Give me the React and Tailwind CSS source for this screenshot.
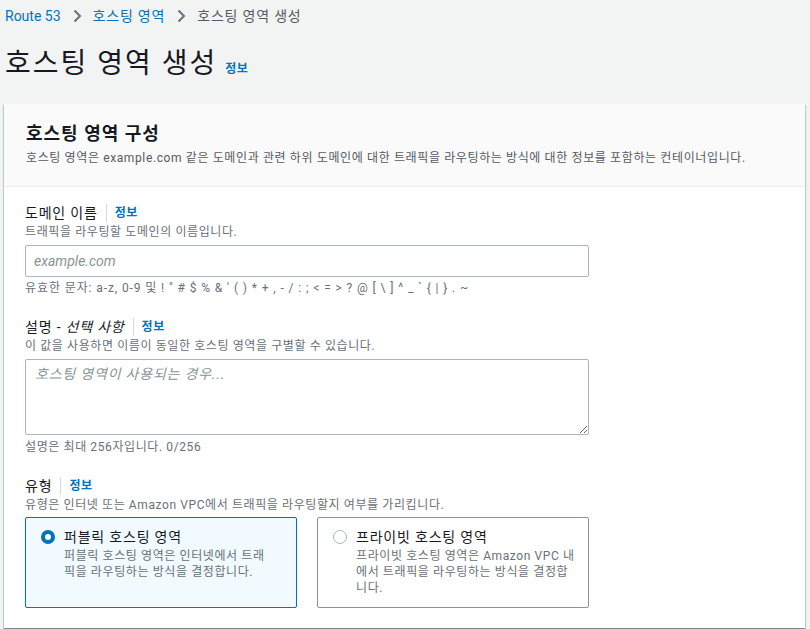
import { useState } from 'react'

const font = { fontFamily: 'Roboto, "Noto Sans CJK KR", sans-serif' }

function InfoLink() {
    return (
        <span className="flex items-center">
            <span className="mx-[8px] h-[18px] w-px bg-[#d5dbdb]"></span>
            <a href="#" className="text-[12px] font-bold leading-5 tracking-[0.6px] text-[#0073bb]">정보</a>
        </span>
    )
}

function FieldLabel({ children }) {
    return (
        <div className="flex items-center">
            <span className="text-[14px] leading-5 tracking-[0.8px] text-[#16191f]">{children}</span>
            <InfoLink />
        </div>
    )
}

function Chevron() {
    return (
        <svg width="16" height="16" viewBox="0 0 16 16" className="mx-[8px]">
            <path d="M5.5 2.5 11 8l-5.5 5.5" fill="none" stroke="#687078" strokeWidth="2" />
        </svg>
    )
}

function Tile({ selected, title, desc, onClick, wide }) {
    return (
        <div
            onClick={onClick}
            className={
                'flex h-[91px] cursor-pointer rounded-[2px] border pl-[15px] pt-[9px] ' +
                (wide ? 'pr-[10px] ' : 'pr-[24px] ') +
                (selected ? 'border-[#0073bb] bg-[#f1faff]' : 'border-[#879596] bg-white')
            }
        >
            <div className="mt-[3px] mr-[9px] flex-none">
                {selected ? (
                    <span className="block h-[14px] w-[14px] rounded-full border-[4px] border-[#0073bb] bg-white"></span>
                ) : (
                    <span className="block h-[14px] w-[14px] rounded-full border border-[#aab7b8] bg-white"></span>
                )}
            </div>
            <div>
                <div className="text-[14px] leading-5 tracking-[0.8px] text-[#16191f]">{title}</div>
                <div className="mt-px break-all text-[12px] leading-4 tracking-[0.6px] text-[#687078]">{desc}</div>
            </div>
        </div>
    )
}

export default function App() {
    const [domain, setDomain] = useState('')
    const [comment, setComment] = useState('')
    const [type, setType] = useState('public')

    return (
        <div className="min-h-screen bg-[#f2f3f3] pl-[4px] pr-[5px]" style={font}>
            <nav className="flex items-center pl-px pt-[6px] text-[14px] leading-5 tracking-[0.8px]">
                <a href="#" className="text-[#0073bb] tracking-normal">Route 53</a>
                <Chevron />
                <a href="#" className="text-[#0073bb]">호스팅 영역</a>
                <Chevron />
                <span className="text-[#545b64]">호스팅 영역 생성</span>
            </nav>

            <div className="mt-[20px] flex items-end pl-px">
                <h1 className="text-[28px] font-normal leading-9 tracking-[2px] text-[#16191f]">호스팅 영역 생성</h1>
                <a href="#" className="mb-[3px] ml-[8px] text-[12px] font-bold leading-5 tracking-[0.6px] text-[#0073bb]">정보</a>
            </div>

            <div className="mt-[22px] bg-white shadow-[0_1px_1px_0_rgba(0,28,36,0.3),1px_1px_1px_0_rgba(0,28,36,0.15),-1px_1px_1px_0_rgba(0,28,36,0.15)]">
                <div className="border-b border-[#eaeded] bg-[#fafafa] px-[22px] pb-[20px] pt-[19px]">
                    <h2 className="text-[18px] font-bold leading-[22px] tracking-[1px] text-[#16191f]">호스팅 영역 구성</h2>
                    <p className="mt-[5px] text-[12px] leading-4 tracking-[0.62px] text-[#545b64]">
                        호스팅 영역은 example.com 같은 도메인과 관련 하위 도메인에 대한 트래픽을 라우팅하는 방식에 대한 정보를 포함하는 컨테이너입니다.
                    </p>
                </div>

                <div className="px-[21px] pb-[20px] pt-[16px]">
                    <div className="w-[564px]">
                        <FieldLabel>도메인 이름</FieldLabel>
                        <p className="mt-px text-[12px] leading-4 tracking-[0.6px] text-[#687078]">트래픽을 라우팅할 도메인의 이름입니다.</p>
                        <input
                            type="text"
                            value={domain}
                            onChange={(e) => setDomain(e.target.value)}
                            placeholder="example.com"
                            className="mt-[5px] block h-[32px] w-full rounded-[2px] border border-[#aab7b8] bg-white px-[8px] text-[14px] text-[#16191f] outline-none placeholder:italic placeholder:text-[#879596]"
                        />
                        <p className="mt-[3px] text-[12px] leading-4 tracking-[0.9px] text-[#687078]">
                            유효한 문자: a-z, 0-9 및 ! " # $ % &amp; ' ( ) * + , - / : ; &lt; = &gt; ? @ [ \ ] ^ _ ` {'{'} | {'}'} . ~
                        </p>
                    </div>

                    <div className="mt-[21px] w-[564px]">
                        <FieldLabel>설명 - <i>선택 사항</i></FieldLabel>
                        <p className="mt-px text-[12px] leading-4 tracking-[0.6px] text-[#687078]">이 값을 사용하면 이름이 동일한 호스팅 영역을 구별할 수 있습니다.</p>
                        <textarea
                            value={comment}
                            onChange={(e) => setComment(e.target.value)}
                            placeholder="호스팅 영역이 사용되는 경우..."
                            className="mt-[5px] block h-[76px] w-full rounded-[2px] border border-[#aab7b8] bg-white px-[9px] py-[4px] text-[14px] leading-5 tracking-[0.8px] text-[#16191f] outline-none placeholder:italic placeholder:text-[#879596]"
                        ></textarea>
                        <p className="mt-[4px] text-[12px] leading-4 tracking-[0.6px] text-[#687078]">설명은 최대 256자입니다. {comment.length}/256</p>
                    </div>

                    <div className="mt-[21px]">
                        <FieldLabel>유형</FieldLabel>
                        <p className="mt-px text-[12px] leading-4 tracking-[0.6px] text-[#687078]">유형은 인터넷 또는 Amazon VPC에서 트래픽을 라우팅할지 여부를 가리킵니다.</p>
                        <div className="mt-[4px] grid w-[564px] grid-cols-2 gap-[20px]">
                            <Tile
                                selected={type === 'public'}
                                onClick={() => setType('public')}
                                title="퍼블릭 호스팅 영역"
                                desc="퍼블릭 호스팅 영역은 인터넷에서 트래픽을 라우팅하는 방식을 결정합니다."
                            />
                            <Tile
                                wide
                                selected={type === 'private'}
                                onClick={() => setType('private')}
                                title="프라이빗 호스팅 영역"
                                desc="프라이빗 호스팅 영역은 Amazon VPC 내에서 트래픽을 라우팅하는 방식을 결정합니다."
                            />
                        </div>
                    </div>
                </div>
            </div>
        </div>
    )
}
